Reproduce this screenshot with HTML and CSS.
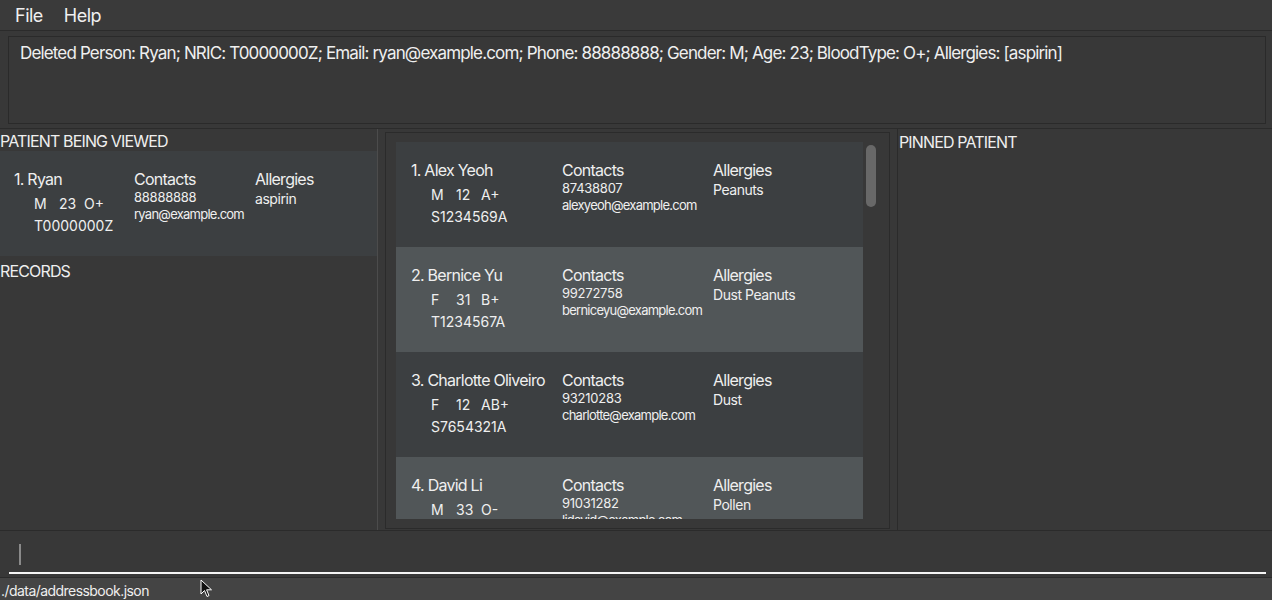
FILE: index.html
```html
<!DOCTYPE html>
<html>
<head>
<meta charset="utf-8">
<link rel="stylesheet" href="styles.css">
</head>
<body>
<div class="app">
  <div class="menubar">
    <span class="menu-item">File</span>
    <span class="menu-item">Help</span>
  </div>
  <div class="result">Deleted Person: Ryan; NRIC: T0000000Z; Email: ryan@example.com; Phone: 88888888; Gender: M; Age: 23; BloodType: O+; Allergies: [aspirin]</div>
  <div class="main">
    <div class="left">
      <div class="section-label">PATIENT BEING VIEWED</div>
      <div class="card card-dark card-left">
        <div class="col">
          <div class="name">1. Ryan</div>
          <div class="sub"><span class="slot">M</span><span class="slot">23</span><span class="slot">O+</span></div>
          <div class="nric">T0000000Z</div>
        </div>
        <div class="col">
          <div class="head">Contacts</div>
          <div class="phone">88888888</div>
          <div class="email">ryan@example.com</div>
        </div>
        <div class="col">
          <div class="head">Allergies</div>
          <div class="allergy">aspirin</div>
        </div>
      </div>
      <div class="section-label records">RECORDS</div>
    </div>
    <div class="middle">
      <div class="listbox">
        <div class="cards">
          <div class="card card-dark">
            <div class="col">
              <div class="name">1. Alex Yeoh</div>
              <div class="sub"><span class="slot">M</span><span class="slot">12</span><span class="slot">A+</span></div>
              <div class="nric">S1234569A</div>
            </div>
            <div class="col">
              <div class="head">Contacts</div>
              <div class="phone">87438807</div>
              <div class="email">alexyeoh@example.com</div>
            </div>
            <div class="col">
              <div class="head">Allergies</div>
              <div class="allergy">Peanuts</div>
            </div>
          </div>
          <div class="card card-light">
            <div class="col">
              <div class="name">2. Bernice Yu</div>
              <div class="sub"><span class="slot">F</span><span class="slot">31</span><span class="slot">B+</span></div>
              <div class="nric">T1234567A</div>
            </div>
            <div class="col">
              <div class="head">Contacts</div>
              <div class="phone">99272758</div>
              <div class="email">berniceyu@example.com</div>
            </div>
            <div class="col">
              <div class="head">Allergies</div>
              <div class="allergy">Dust Peanuts</div>
            </div>
          </div>
          <div class="card card-dark">
            <div class="col">
              <div class="name">3. Charlotte Oliveiro</div>
              <div class="sub"><span class="slot">F</span><span class="slot">12</span><span class="slot">AB+</span></div>
              <div class="nric">S7654321A</div>
            </div>
            <div class="col">
              <div class="head">Contacts</div>
              <div class="phone">93210283</div>
              <div class="email">charlotte@example.com</div>
            </div>
            <div class="col">
              <div class="head">Allergies</div>
              <div class="allergy">Dust</div>
            </div>
          </div>
          <div class="card card-light">
            <div class="col">
              <div class="name">4. David Li</div>
              <div class="sub"><span class="slot">M</span><span class="slot">33</span><span class="slot">O-</span></div>
              <div class="nric">S1111111A</div>
            </div>
            <div class="col">
              <div class="head">Contacts</div>
              <div class="phone">91031282</div>
              <div class="email">lidavid@example.com</div>
            </div>
            <div class="col">
              <div class="head">Allergies</div>
              <div class="allergy">Pollen</div>
            </div>
          </div>
        </div>
        <div class="scrollbar"><div class="thumb"></div></div>
      </div>
    </div>
    <div class="right">
      <div class="section-label pinned">PINNED PATIENT</div>
    </div>
  </div>
  <div class="command">
    <div class="command-field"><span class="caret"></span></div>
  </div>
  <div class="status">./data/addressbook.json</div>
  <svg class="pointer" width="14" height="20" viewBox="0 0 14 20"><path d="M1 1 L1 15 L4.5 11.5 L7 17.5 L9 16.6 L6.6 10.8 L11.5 10.8 Z" fill="#111" stroke="#fff" stroke-width="1"/></svg>
</div>
</body>
</html>
```

FILE: styles.css
```css
* { box-sizing: border-box; }
html, body { margin: 0; padding: 0; }
body {
  background: #383838;
  font-family: Inter, "Noto Sans", sans-serif;
  color: #efefef;
  width: 1272px;
  height: 600px;
  overflow: hidden;
}
.app {
  position: relative;
  display: flex;
  flex-direction: column;
  height: 600px;
}
.app > * { flex-shrink: 0; }
.menubar {
  height: 31px;
  display: flex;
  align-items: center;
  gap: 21px;
  padding-left: 15px;
  font-size: 18px;
  letter-spacing: -0.5px;
  background: #3a3a3a;
  border-bottom: 1px solid #2b2b2b;
}
.result {
  margin: 5px 6px 0 8px;
  height: 88px;
  border: 1px solid #2a2a2a;
  padding: 4px 11px;
  font-size: 17px;
  letter-spacing: -0.85px;
  line-height: 24px;
  background: #383838;
  white-space: nowrap;
}
.main {
  margin-top: 4px;
  height: 403px;
  display: flex;
  border-top: 1px solid #2b2b2b;
  border-bottom: 1px solid #2b2b2b;
}
.left {
  width: 378px;
  border-right: 1px solid #4c4c4c;
}
.section-label {
  font-size: 16px;
  letter-spacing: -0.85px;
  padding-top: 2px;
  line-height: 20px;
  height: 22px;
  white-space: nowrap;
}
.records { margin-top: 3px; }
.middle {
  width: 519px;
  padding: 3px 7px 0 7px;
}
.listbox {
  height: 397px;
  border: 1px solid #2b2b2b;
  padding: 9px 10px 9px 10px;
  display: flex;
}
.cards {
  width: 467px;
  overflow: hidden;
}
.scrollbar {
  width: 16px;
  padding: 3px 3px;
}
.thumb {
  width: 10px;
  height: 62px;
  border-radius: 5px;
  background: #686868;
}
.right {
  flex: 1;
  border-left: 1px solid #2b2b2b;
  padding: 1px 0 0 1px;
}
.card {
  height: 105px;
  display: grid;
  grid-template-columns: 151px 151px 151px;
  padding: 18px 0 0 15px;
}
.card-left {
  width: 377px;
  grid-template-columns: 120px 121px 121px;
  padding-left: 14px;
}
.card-dark { background: #3c3f41; }
.card-light { background: #515658; }
.col { min-width: 0; white-space: nowrap; }
.name, .head {
  font-size: 16px;
  letter-spacing: -0.75px;
  line-height: 20px;
}
.sub {
  margin-top: 4px;
  padding-left: 20px;
  font-size: 14px;
  line-height: 22px;
  display: flex;
}
.slot { width: 25px; }
.nric {
  padding-left: 20px;
  font-size: 14px;
  line-height: 21px;
}
.phone {
  font-size: 13px;
  letter-spacing: -0.25px;
  line-height: 17px;
}
.email {
  font-size: 13px;
  letter-spacing: -0.75px;
  line-height: 17px;
}
.allergy {
  margin-top: 1px;
  font-size: 14px;
  letter-spacing: -0.45px;
  line-height: 18px;
}
.command {
  height: 46px;
  padding: 0 6px 0 9px;
}
.command-field {
  height: 43px;
  border-bottom: 2px solid #f4f4f4;
  padding: 13px 0 0 10px;
}
.caret {
  display: block;
  width: 2px;
  height: 21px;
  background: #8a8a8a;
}
.status {
  height: 23px;
  background: #444444;
  border-top: 1px solid #2b2b2b;
  font-size: 14px;
  letter-spacing: -0.55px;
  line-height: 19px;
  padding: 3px 0 0 1px;
  white-space: nowrap;
}
.pointer {
  position: absolute;
  left: 200px;
  top: 579px;
}
```
